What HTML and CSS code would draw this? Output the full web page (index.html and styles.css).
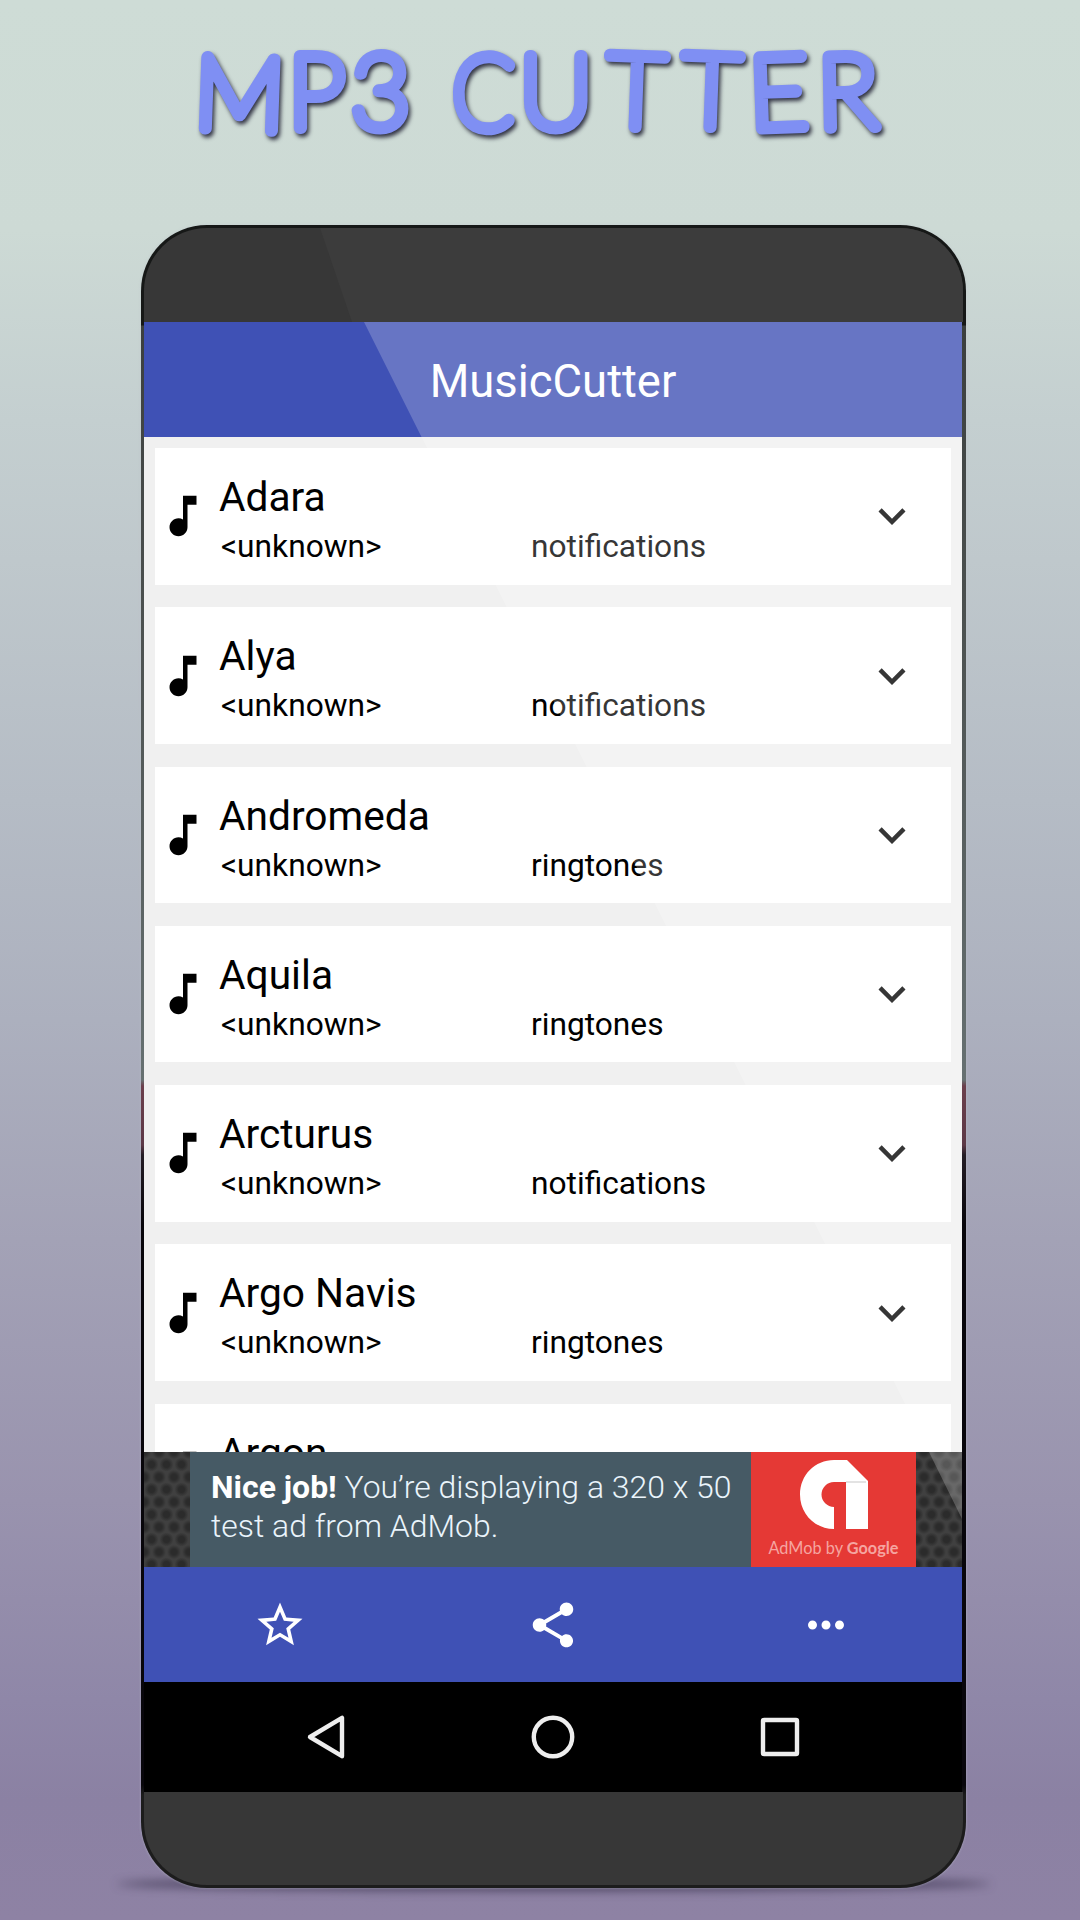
FILE: index.html
```html
<!DOCTYPE html>
<html lang="en">
<head>
<meta charset="utf-8">
<title>MP3 Cutter</title>
<link rel="stylesheet" href="styles.css">
</head>
<body>
<svg class="defs" width="0" height="0" aria-hidden="true">
  <symbol id="note" viewBox="0 0 24 24"><path d="M12 3v10.55c-.59-.34-1.27-.55-2-.55-2.21 0-4 1.79-4 4s1.79 4 4 4 4-1.79 4-4V7h4V3h-6z"/></symbol>
  <symbol id="more" viewBox="0 0 24 24"><path d="M16.59 8.59L12 13.17 7.41 8.59 6 10l6 6 6-6z"/></symbol>
</svg>
<main class="poster">
  <h1 class="headline">
    <svg width="1080" height="190" viewBox="0 0 1080 190">
      <text class="headline-text" y="128"><tspan x="193" rotate="2">M</tspan><tspan x="288">P</tspan><tspan x="351">3</tspan> <tspan x="451" rotate="2" dy="-1" textLength="62" lengthAdjust="spacingAndGlyphs">C</tspan><tspan x="519" dy="1">U</tspan><tspan x="606" rotate="2" dy="-2">T</tspan><tspan x="681" rotate="2">T</tspan><tspan x="750" rotate="-2" dy="3">E</tspan><tspan x="818" rotate="-1" dy="-1">R</tspan></text>
    </svg>
  </h1>
  <div class="phone-wrap">
    <div class="phone">
      <div class="bezel bezel-top"></div>
      <div class="screen">
        <header class="appbar">MusicCutter</header>
        <section class="list">
          <article class="card"><svg class="icon"><use href="#note"/></svg><div class="info"><h2>Adara</h2><div class="meta"><span>&lt;unknown&gt;</span><span>notifications</span></div></div><svg class="icon"><use href="#more"/></svg></article>
          <article class="card"><svg class="icon"><use href="#note"/></svg><div class="info"><h2>Alya</h2><div class="meta"><span>&lt;unknown&gt;</span><span>notifications</span></div></div><svg class="icon"><use href="#more"/></svg></article>
          <article class="card"><svg class="icon"><use href="#note"/></svg><div class="info"><h2>Andromeda</h2><div class="meta"><span>&lt;unknown&gt;</span><span>ringtones</span></div></div><svg class="icon"><use href="#more"/></svg></article>
          <article class="card"><svg class="icon"><use href="#note"/></svg><div class="info"><h2>Aquila</h2><div class="meta"><span>&lt;unknown&gt;</span><span>ringtones</span></div></div><svg class="icon"><use href="#more"/></svg></article>
          <article class="card"><svg class="icon"><use href="#note"/></svg><div class="info"><h2>Arcturus</h2><div class="meta"><span>&lt;unknown&gt;</span><span>notifications</span></div></div><svg class="icon"><use href="#more"/></svg></article>
          <article class="card"><svg class="icon"><use href="#note"/></svg><div class="info"><h2>Argo Navis</h2><div class="meta"><span>&lt;unknown&gt;</span><span>ringtones</span></div></div><svg class="icon"><use href="#more"/></svg></article>
          <article class="card"><svg class="icon"><use href="#note"/></svg><div class="info"><h2>Argon</h2></div></article>
        </section>
        <aside class="ad">
          <p class="ad-text"><span class="ad-line"><b>Nice job!</b> You’re displaying a 320 x 50</span><span class="ad-line">test ad from AdMob.</span></p>
          <div class="ad-brand">
            <svg width="68" height="69" viewBox="0 0 68 69"><path fill="#fff" d="M34 69C15 69 0 54 0 34.500S15 0 34 0h13l21 21v48H46V22H34a12.200 12.200 0 0 0 0 25z"/><path fill="#e3e3e3" d="M46 21h20v2H46z"/></svg>
            <span>AdMob by <b>Google</b></span>
          </div>
        </aside>
        <nav class="tabs">
          <svg class="icon" viewBox="0 0 24 24"><path d="M22 9.240l-7.190-.62L12 2 9.190 8.630 2 9.240l5.460 4.730L5.820 21 12 17.270 18.180 21l-1.630-7.030L22 9.240zM12 15.400l-3.760 2.270 1-4.280-3.320-2.880 4.380-.38L12 6.100l1.710 4.040 4.380.38-3.320 2.880 1 4.280L12 15.400z"/></svg>
          <svg class="icon" viewBox="0 0 24 24"><path d="M18 16.080c-.76 0-1.440.3-1.960.77L8.910 12.700c.05-.23.09-.46.09-.7s-.04-.47-.09-.7l7.050-4.110c.54.5 1.250.81 2.040.81 1.660 0 3-1.340 3-3s-1.340-3-3-3-3 1.340-3 3c0 .24.04.47.09.7L8.040 9.810C7.500 9.310 6.790 9 6 9c-1.660 0-3 1.340-3 3s1.340 3 3 3c.79 0 1.500-.31 2.040-.81l7.120 4.160c-.05.21-.08.43-.08.65 0 1.610 1.310 2.920 2.920 2.920s2.920-1.310 2.920-2.920-1.310-2.920-2.920-2.920z"/></svg>
          <svg class="icon" viewBox="0 0 24 24"><path d="M6 10c-1.100 0-2 .9-2 2s.9 2 2 2 2-.9 2-2-.9-2-2-2zm12 0c-1.100 0-2 .9-2 2s.9 2 2 2 2-.9 2-2-.9-2-2-2zm-6 0c-1.100 0-2 .9-2 2s.9 2 2 2 2-.9 2-2-.9-2-2-2z"/></svg>
        </nav>
        <div class="sysnav">
          <svg viewBox="0 0 48 48"><path d="M40 4.800v38.400L8 24z"/></svg>
          <svg viewBox="0 0 48 48"><circle cx="24" cy="24" r="19.200"/></svg>
          <svg viewBox="0 0 48 48"><rect x="7" y="7" width="34" height="34" rx="1"/></svg>
        </div>
        <div class="sheen"></div>
      </div>
      <div class="bezel bezel-bottom"></div>
    </div>
  </div>
</main>
</body>
</html>
```
FILE: styles.css
```css
* { box-sizing: border-box; margin: 0; padding: 0; }
body { width: 1080px; height: 1920px; overflow: hidden; font-family: Roboto, "Liberation Sans", sans-serif; }
.defs { display: block; height: 0; }
.poster {
  height: 1920px;
  background: linear-gradient(180deg, #cedcd6 0, #cddad5 230px, #c4cfd0 420px, #bfc8cc 560px, #b5bcc5 800px, #acb0be 1020px, #a3a2b6 1240px, #9993ae 1500px, #8f87a8 1700px, #8b81a3 1800px, #8e82a4 1920px);
}
.headline { height: 225px; font-size: 0; }
.headline-text {
  font-family: Lato, sans-serif;
  font-weight: 100;
  font-size: 102px;
  fill: #7f8ff3;
  stroke: #7f8ff3;
  stroke-width: 12px;
  stroke-linejoin: round;
  filter: drop-shadow(2px 3px 2px rgba(20, 20, 40, .85));
}
.phone-wrap { position: relative; margin-left: 141px; width: 825px; }
.phone-wrap::before {
  content: "";
  position: absolute;
  left: -24px; right: -24px; bottom: -3px;
  height: 14px;
  border-radius: 50%;
  background: rgba(40, 34, 60, .6);
  filter: blur(5px);
}
.phone {
  position: relative;
  height: 1663px;
  border-radius: 66px;
  overflow: hidden;
  padding: 3px;
  background: linear-gradient(180deg, #161817 0, #161817 100px, #3b3f3e 101px, #4c5150 400px, #667071 855px, #6b3f4c 861px, #5c3846 920px, #241d25 930px, #08060b 1000px, #08060b 1560px, #1c1c1c 1570px);
  box-shadow: 0 0 2px 1px rgba(190, 195, 205, .3);
}
.bezel { background: #373737; }
.bezel-top {
  height: 94px;
  border-radius: 63px 63px 0 0;
  position: relative;
  overflow: hidden;
}
.bezel-top::after {
  content: "";
  position: absolute;
  inset: 0;
  background: #3c3c3c;
  clip-path: polygon(176px 0, 100% 0, 100% 100%, 208px 100%);
}
.bezel-bottom { height: 93px; border-radius: 0 0 63px 63px; }
.screen { position: relative; height: 1470px; width: 818px; display: flex; flex-direction: column; }
.appbar {
  height: 115px;
  background: #3f51b5;
  color: #fff;
  display: flex;
  align-items: center;
  justify-content: center;
  font-size: 45.400px;
  padding-top: 4px;
}
.list {
  height: 1015px;
  background: #f0f0f0;
  overflow: hidden;
  padding: 11px 11px 0;
  display: flex;
  flex-direction: column;
  gap: 22.750px;
}
.card {
  flex: none;
  height: 136.500px;
  background: #fff;
  display: flex;
  align-items: center;
  padding: 0 32.500px 0 .5px;
}
.icon { width: 54px; height: 54px; flex: none; fill: #000; }
.info { flex: 1; align-self: stretch; padding: 25px 0 0 9.500px; color: #000; }
.info h2 { font-size: 40.700px; font-weight: 400; line-height: 48px; }
.meta { display: grid; grid-template-columns: 310px 1fr; font-size: 31.700px; line-height: 48px; padding: 2px 0 0 2px; }
.ad {
  height: 115px;
  display: flex;
  padding: 0 46px;
  background-color: #404040;
  background-image: radial-gradient(circle, #2b2b2b 3px, transparent 7px), radial-gradient(circle, #2b2b2b 3px, transparent 7px);
  background-size: 15px 25px;
  background-position: 0 0, 7.500px 12.500px;
}
.ad-text { width: 561px; background: #465a65; padding: 16px 0 0 21px; color: #eaf4fb; font-size: 31.950px; font-weight: 300; line-height: 38.500px; }
.ad-text b { font-weight: 700; color: #fff; }
.ad-line { display: block; white-space: nowrap; }
.ad-brand { flex: 1; background: #e53935; display: flex; flex-direction: column; align-items: center; padding-top: 8px; color: #f5a5a0; font-family: Lato, sans-serif; font-size: 16.300px; line-height: 20px; gap: 9px; }
.ad-brand b { font-weight: 700; }
.tabs { height: 115px; background: #3f51b5; display: grid; grid-template-columns: repeat(3, 1fr); place-items: center; }
.tabs .icon { fill: #fff; }
.sysnav { height: 110px; background: #000; display: flex; justify-content: space-between; align-items: center; padding: 0 158px; }
.sysnav svg { width: 48px; height: 48px; fill: none; stroke: #eee; stroke-width: 4.400px; stroke-linejoin: round; }
.sheen {
  position: absolute;
  inset: 0;
  background: rgba(255, 255, 255, .21);
  clip-path: polygon(220px 0, 100% 0, 100% 1197px, 785px 1130px);
}
```
